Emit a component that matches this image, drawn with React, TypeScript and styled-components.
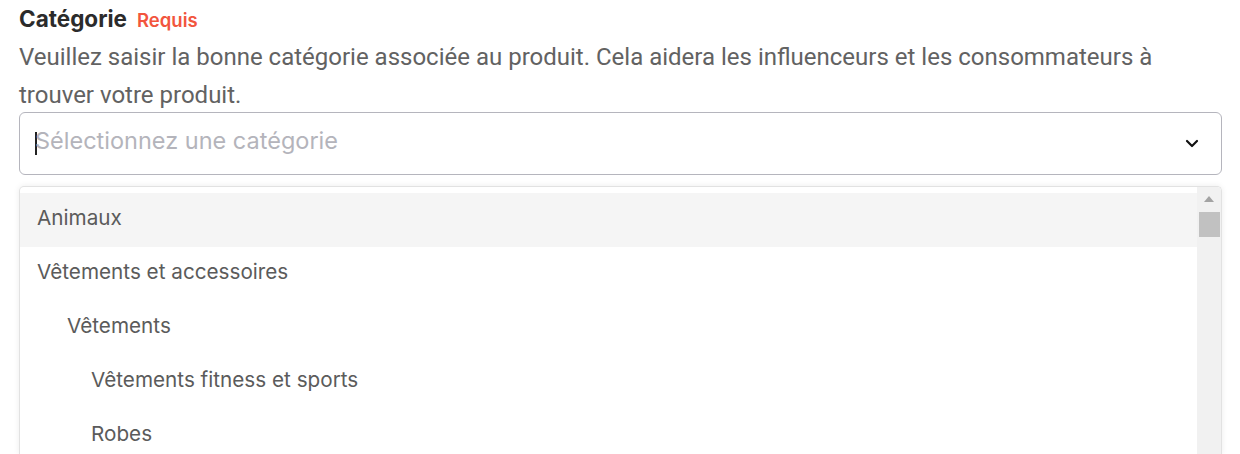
import React from "react";
import styled, { createGlobalStyle } from "styled-components";

const Global = createGlobalStyle`
  html, body { margin: 0; padding: 0; background: #ffffff; }
  body { overflow: hidden; }
`;

const Page = styled.div`
  padding: 4px 18px 0 19px;
  font-family: Inter, "Noto Sans", sans-serif;
`;

const LabelRow = styled.div`
  display: flex;
  align-items: baseline;
  gap: 10px;
  height: 30px;
  line-height: 30px;
`;

const Title = styled.span`
  font-family: Inter, sans-serif;
  font-weight: 700;
  font-size: 22.5px;
  color: #2b2b2b;
`;

const Required = styled.span`
  font-family: Inter, sans-serif;
  font-weight: 600;
  font-size: 18.5px;
  color: #f2553d;
`;

const Description = styled.p`
  margin: 4px 0 0 0;
  font-family: Roboto, sans-serif;
  font-size: 24px;
  line-height: 38px;
  color: #626262;
`;

const SelectBox = styled.div`
  margin-top: -2px;
  height: 61px;
  border: 1px solid #b5b5bd;
  border-radius: 6px;
  display: flex;
  align-items: center;
  padding: 0 22px 0 15px;
`;

const Caret = styled.span`
  width: 2px;
  height: 23px;
  background: #222;
  margin-right: -2px;
`;

const Placeholder = styled.span`
  flex: 1;
  margin-bottom: 6px;
  font-family: Inter, sans-serif;
  font-size: 23.5px;
  color: #b4b4bb;
`;

const Menu = styled.div`
  margin-top: 11px;
  border: 1px solid #e2e2e2;
  border-bottom: none;
  border-radius: 5px 5px 0 0;
  box-shadow: 0 0 6px rgba(0, 0, 0, 0.08);
  display: flex;
  height: 267px;
  overflow: hidden;
`;

const List = styled.div`
  flex: 1;
  padding-top: 6px;
`;

const Option = styled.div<{ $level: number; $active?: boolean }>`
  height: 54px;
  box-sizing: border-box;
  padding-bottom: 6px;
  display: flex;
  align-items: center;
  padding-left: ${(p) => 17 + [0, 30, 54][p.$level]}px;
  font-family: Inter, sans-serif;
  font-size: 20.7px;
  color: #5b5b5b;
  background: ${(p) => (p.$active ? "#f5f5f5" : "#ffffff")};
`;

const Scrollbar = styled.div`
  width: 24px;
  background: #f1f1f1;
  display: flex;
  flex-direction: column;
  align-items: center;
`;

const ArrowUp = styled.div`
  margin-top: 9px;
  width: 0;
  height: 0;
  border-left: 5px solid transparent;
  border-right: 5px solid transparent;
  border-bottom: 6px solid #a3a3a3;
`;

const Thumb = styled.div`
  margin-top: 10px;
  width: 21px;
  height: 25px;
  background: #c1c1c1;
`;

const options = [
  { label: "Animaux", level: 0, active: true },
  { label: "Vêtements et accessoires", level: 0 },
  { label: "Vêtements", level: 1 },
  { label: "Vêtements fitness et sports", level: 2 },
  { label: "Robes", level: 2 },
];

export default function App() {
  return (
    <Page>
      <Global />
      <LabelRow>
        <Title>Catégorie</Title>
        <Required>Requis</Required>
      </LabelRow>
      <Description>
        Veuillez saisir la bonne catégorie associée au produit. Cela aidera les influenceurs et les consommateurs à
        trouver votre produit.
      </Description>
      <SelectBox>
        <Caret />
        <Placeholder>Sélectionnez une catégorie</Placeholder>
        <svg width="14" height="9" viewBox="0 0 14 9">
          <path d="M2 2l5 5 5-5" fill="none" stroke="#111" strokeWidth="2.2" strokeLinecap="round" strokeLinejoin="round" />
        </svg>
      </SelectBox>
      <Menu>
        <List>
          {options.map((o) => (
            <Option key={o.label} $level={o.level} $active={o.active}>
              {o.label}
            </Option>
          ))}
        </List>
        <Scrollbar>
          <ArrowUp />
          <Thumb />
        </Scrollbar>
      </Menu>
    </Page>
  );
}
